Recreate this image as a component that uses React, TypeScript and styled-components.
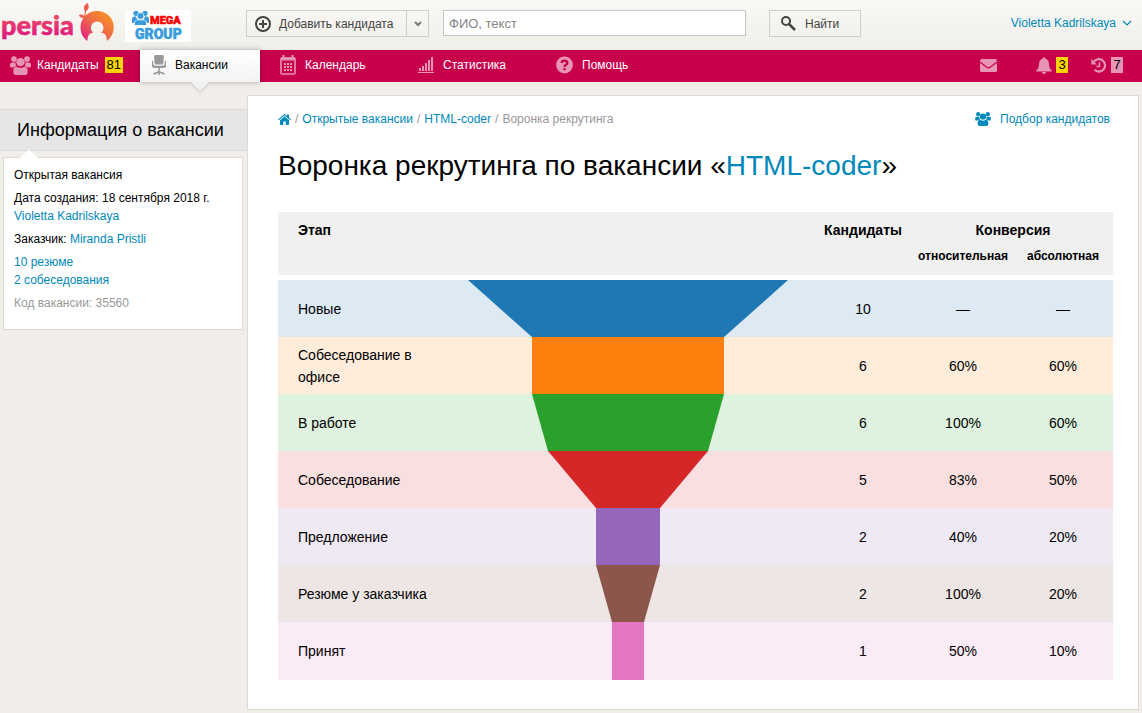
import React from "react";
import styled, { createGlobalStyle } from "styled-components";

const link = "#0088bb";
const pale = "#e795b4";

const GlobalStyle = createGlobalStyle`
  * { box-sizing: border-box; }
  body {
    margin: 0;
    background: #f1eee9;
    font: 12px/18px "Liberation Sans", Arial, sans-serif;
    color: #000;
  }
  a { color: ${link}; text-decoration: none; }
  svg { display: block; flex: none; }
`;

const Header = styled.header`
  display: flex;
  align-items: flex-start;
  height: 50px;
  background: linear-gradient(#faf9f6, #f0eee8);
`;

const Logos = styled.div`
  display: flex;
  flex: none;
  width: 246px;
`;

const PersiaLogo = styled.a`
  display: flex;
  width: 125px;
  height: 50px;
`;

const MegaLogo = styled.a`
  width: 66px;
  height: 32px;
  margin-top: 10px;
  background: #fff;
`;

const AddGroup = styled.div`
  display: flex;
  flex: none;
  margin-top: 10px;
  width: 183px;
  height: 27px;
  border: 1px solid #d0cfca;
`;

const PlainButton = styled.button`
  display: flex;
  align-items: center;
  border: 0;
  padding: 0;
  background: none;
  color: #444;
  font: inherit;
  white-space: nowrap;
`;

const AddButton = styled(PlainButton)`
  flex: 1;
  gap: 8px;
  padding-left: 8px;
`;

const MoreButton = styled(PlainButton)`
  justify-content: center;
  width: 22px;
  border-left: 1px solid #d0cfca;
`;

const SearchForm = styled.form`
  display: flex;
  flex: 0 1 418px;
  gap: 23px;
  margin: 10px 0 0 14px;
`;

const SearchInput = styled.input`
  flex: 1;
  min-width: 0;
  height: 26px;
  padding: 0 5px;
  border: 1px solid #c4c4c4;
  background: #fff;
  font: inherit;
  font-size: 13px;
  &::placeholder { color: #858585; opacity: 1; }
`;

const SearchButton = styled(PlainButton)`
  width: 92px;
  height: 27px;
  gap: 9px;
  padding-left: 11px;
  border: 1px solid #d0cfca;
`;

const UserLink = styled.a`
  display: flex;
  align-items: center;
  gap: 6px;
  margin: 14px 10px 0 auto;
  white-space: nowrap;
`;

const Nav = styled.nav`
  display: flex;
  height: 32px;
  background: #c8004c;
`;

const NavItem = styled.a<{ $active?: boolean; $width: number; $pad: number }>`
  position: relative;
  display: flex;
  align-items: center;
  flex: none;
  gap: 9px;
  width: ${(p) => p.$width}px;
  padding: 0 0 2px ${(p) => p.$pad}px;
  color: ${(p) => (p.$active ? "#000" : "#fff")};
  ${(p) =>
    p.$active &&
    `
    background: linear-gradient(#fff, #f3f3f3);
    box-shadow: 0 0 5px rgba(0, 0, 0, 0.3);
    &::after {
      content: "";
      position: absolute;
      top: 32px;
      left: 51px;
      border: 9px solid transparent;
      border-top-color: #f3f3f3;
      border-bottom: 0;
      filter: drop-shadow(0 2px 1px rgba(0, 0, 0, 0.12));
    }
  `}
`;

const Counted = styled.span`
  display: flex;
  align-items: center;
  gap: 6px;
`;

const Badge = styled.span<{ $muted?: boolean }>`
  padding: 0 2px;
  background: ${(p) => (p.$muted ? pale : "#fdd400")};
  color: #000;
  font-size: 13px;
  line-height: 16px;
  min-width: 12px;
  text-align: center;
`;

const NavTools = styled.div`
  display: flex;
  align-items: center;
  margin-left: auto;
  padding: 0 19px 2px 0;
  gap: 23px;
`;

const Tool = styled.a<{ $spaced?: boolean }>`
  display: flex;
  align-items: center;
  gap: 4px;
  margin-right: ${(p) => (p.$spaced ? 16 : 0)}px;
`;

const Columns = styled.div`
  display: flex;
  align-items: flex-start;
  padding: 13px 3px 3px 0;
`;

const Sidebar = styled.aside`
  flex: none;
  width: 247px;
  padding-top: 14px;
`;

const SideTitle = styled.h2`
  margin: 0;
  padding: 0 17px;
  border: solid #d9d8d3;
  border-width: 1px 0;
  background: #e6e6e6;
  font-size: 18px;
  font-weight: 400;
  line-height: 40px;
  white-space: nowrap;
`;

const InfoBox = styled.section`
  position: relative;
  margin: 6px 4px 0 3px;
  padding: 8px 10px 12px;
  border: 1px solid #dcdad5;
  background: #fff;
  &::before {
    content: "";
    position: absolute;
    top: -9px;
    left: 16px;
    border: 9px solid transparent;
    border-bottom-color: #fff;
    border-top: 0;
  }
`;

const InfoLine = styled.p<{ $muted?: boolean }>`
  margin: 0 0 5px;
  color: ${(p) => (p.$muted ? "#999" : "inherit")};
`;

const Panel = styled.main`
  flex: 1;
  min-width: 0;
  padding: 14px 25px 29px 30px;
  border: 1px solid #dcdad5;
  background: #fff;
`;

const PanelTop = styled.div`
  display: flex;
  justify-content: space-between;
  padding-right: 3px;
`;

const Crumbs = styled.nav`
  display: flex;
  align-items: center;
  gap: 4px;
  color: #999;
`;

const PickLink = styled.a`
  display: flex;
  align-items: center;
  gap: 9px;
`;

const Title = styled.h1`
  margin: 20px 0 28px;
  font-size: 28px;
  font-weight: 400;
  line-height: 36px;
`;

const FunnelTable = styled.table`
  width: 100%;
  border-collapse: collapse;
  table-layout: fixed;
  font-size: 14px;
  line-height: 22px;
`;

const HeadRow = styled.tr<{ $last?: boolean }>`
  height: ${(p) => (p.$last ? 30 : 33)}px;
  background: #f0f0f0;
`;

const HeadCell = styled.th<{ $left?: boolean; $small?: boolean }>`
  padding: ${(p) => (p.$small ? "0" : "7px 0 0")};
  padding-left: ${(p) => (p.$left ? 20 : 0)}px;
  font-size: ${(p) => (p.$small ? 12 : 14)}px;
  text-align: ${(p) => (p.$left ? "left" : "center")};
  vertical-align: top;
`;

const GapCell = styled.td`
  height: 5px;
  padding: 0;
`;

const StageRow = styled.tr<{ $tint: string }>`
  height: 57px;
  background: ${(p) => p.$tint};
`;

const StageName = styled.th`
  padding: 0 30px 0 20px;
  font-weight: 400;
  text-align: left;
`;

const ShapeCell = styled.td`
  padding: 0;
`;

const ValueCell = styled.td`
  padding: 0;
  text-align: center;
`;

const People = ({ size, color }: { size: number; color: string }) => (
  <svg width={size} height={Math.round(size * 0.9)} viewBox="0 0 20 18" fill={color}>
    <circle cx="3.800" cy="2.800" r="2.700" />
    <circle cx="16.200" cy="2.800" r="2.700" />
    <circle cx="10" cy="5.800" r="4" />
    <path d="M0 9.500V8Q0 6.100 1.800 6.100H5.200Q5.300 8.500 6.500 9.600Q4 9.700 3.200 11H1.300Q0 11 0 9.500ZM20 9.500V8Q20 6.100 18.200 6.100H14.800Q14.700 8.500 13.500 9.600Q16 9.700 16.800 11H18.700Q20 11 20 9.500Z" />
    <path d="M3.200 15.500V13.500Q3.200 10.400 6 10.400H6.800Q10 12 13.200 10.400H14Q16.800 10.400 16.800 13.500V15.500Q16.800 18 14.500 18H5.500Q3.200 18 3.200 15.500Z" />
  </svg>
);

const ChairIcon = () => (
  <svg width="14" height="20" viewBox="0 0 14 20" fill="#999">
    <path d="M3.500 0H10.500Q12 0 11.900 1.500L11.300 8.500Q11.200 9.500 10.200 9.500H3.800Q2.800 9.500 2.700 8.500L2.100 1.500Q2 0 3.500 0Z" />
    <path d="M0 6H1.300V9.500L3 10.800H11L12.700 9.500V6H14V10.500Q14 13 11.500 13H2.500Q0 13 0 10.500Z" />
    <path d="M6.200 13H7.800V16.300L12.500 18V19.500H11L7.800 17.800V20H6.200V17.800L3 19.500H1.500V18L6.200 16.300Z" />
  </svg>
);

const CalendarIcon = () => (
  <svg width="16" height="20" viewBox="0 0 16 20" fill="none" stroke={pale}>
    <rect x="1" y="3" width="14" height="16" rx="1" strokeWidth="1.600" />
    <path d="M1 4H15" strokeWidth="3" />
    <path d="M3.500 0V3M12.500 0V3" strokeWidth="2" />
    <path d="M4 9H12M4 12H12M4 15H12" strokeWidth="2" strokeDasharray="2 1" />
  </svg>
);

const StatsIcon = () => (
  <svg width="16" height="16" viewBox="0 0 16 16" fill={pale}>
    <path d="M0 15H16V16H0ZM1 11H3V14H1ZM4 9H6V14H4ZM7 6H9V14H7ZM10 3H12V14H10ZM13 0H15V14H13Z" />
  </svg>
);

const HelpIcon = () => (
  <svg width="17" height="18" viewBox="0 0 18 18">
    <circle cx="9" cy="9" r="8.900" fill={pale} />
    <path d="M6 7Q6 4.500 9 4.500Q12 4.500 12 6.800Q12 8 10.500 8.800Q9 9.500 9 11" fill="none" stroke="#c8004c" strokeWidth="2.400" />
    <path d="M7.800 12.300H10.200V14.500H7.800Z" fill="#c8004c" />
  </svg>
);

const MailIcon = () => (
  <svg width="17" height="13" viewBox="0 0 17 13">
    <rect width="17" height="13" rx="1.500" fill={pale} />
    <path d="M0 3L6.500 8Q8.500 9.500 10.500 8L17 3" fill="none" stroke="#c8004c" strokeWidth="1.200" />
  </svg>
);

const BellIcon = () => (
  <svg width="16" height="17" viewBox="0 0 16 17" fill={pale}>
    <path d="M7 1.500Q7 0 8 0T9 1.500Q13 2.500 13 7Q13 11.500 16 13.500Q16 14.500 15 14.500H1Q0 14.500 0 13.500Q3 11.500 3 7Q3 2.500 7 1.500ZM6 15H10Q10 17 8 17T6 15Z" />
  </svg>
);

const HistoryIcon = () => (
  <svg width="16" height="15" viewBox="0 0 16 15" fill="none" stroke={pale}>
    <path d="M2.500 4.200A6.200 6.200 0 1 1 3.500 11.800" strokeWidth="2.200" />
    <path d="M0 1L.5 6.500H6Z" fill={pale} stroke="none" />
    <path d="M8.500 4V8.500H5.500" strokeWidth="1.500" />
  </svg>
);

const HomeIcon = () => (
  <svg width="13" height="11" viewBox="0 0 13 11" fill={link}>
    <path d="M6.500 2.500L11 6.200V10.200Q11 11 10.200 11H7.800V7.500H5.200V11H2.800Q2 11 2 10.200V6.200ZM6.500 0L9 2V.5H11V3.700L13 5.400L12.300 6.200L6.500 1.500L.7 6.200L0 5.400Z" />
  </svg>
);

const stages = [
  { name: "Новые", count: 10, next: 6, rel: "—", abs: "—", tint: "#ddeaf4", fill: "#1f77b4" },
  { name: "Собеседование в офисе", count: 6, next: 6, rel: "60%", abs: "60%", tint: "#ffecdb", fill: "#ff7f0e" },
  { name: "В работе", count: 6, next: 5, rel: "100%", abs: "60%", tint: "#dff1df", fill: "#2ca02c" },
  { name: "Собеседование", count: 5, next: 2, rel: "83%", abs: "50%", tint: "#f9dfdf", fill: "#d62728" },
  { name: "Предложение", count: 2, next: 2, rel: "40%", abs: "20%", tint: "#efe8f5", fill: "#9467bd" },
  { name: "Резюме у заказчика", count: 2, next: 1, rel: "100%", abs: "20%", tint: "#eee6e4", fill: "#8c564b" },
  { name: "Принят", count: 1, next: 1, rel: "50%", abs: "10%", tint: "#fbebf6", fill: "#e377c2" },
];

const FunnelSlice = ({ from, to, fill, height }: { from: number; to: number; fill: string; height: number }) => {
  const a = from * 16;
  const b = to * 16;
  return (
    <svg width="320" height={height} viewBox={`0 0 320 ${height}`}>
      <path d={`M${160 - a} 0H${160 + a}L${160 + b} ${height}H${160 - b}Z`} fill={fill} />
    </svg>
  );
};

export default function App() {
  return (
    <>
      <GlobalStyle />
      <Header>
        <Logos>
          <PersiaLogo href="#" aria-label="persia">
            <svg width="116" height="50" viewBox="0 0 116 50">
              <defs>
                <linearGradient id="peach" x1="0" y1="1" x2="1" y2="0">
                  <stop offset="0.1" stopColor="#e0297c" />
                  <stop offset="0.5" stopColor="#ee6a47" />
                  <stop offset="1" stopColor="#f9a11b" />
                </linearGradient>
                <linearGradient id="word" x1="0" y1="0" x2="0" y2="1">
                  <stop offset="0.3" stopColor="#ea4668" />
                  <stop offset="0.8" stopColor="#df1f7c" />
                </linearGradient>
              </defs>
              <text x="1" y="35" fontFamily="Lato, sans-serif" fontWeight="900" fontSize="27" fill="url(#word)" stroke="url(#word)" strokeWidth="0.500">persia</text>
              <path d="M87.500 41C83 38 80.500 33 80.500 27.500C80.500 18 88 11 97 11C106.500 11 113.800 18 113.800 27C113.800 33 111 38 106.800 41C107 36 105.500 33.500 101 32.500C103 31.200 103.500 29.500 103.500 27.800A6.300 6.300 0 0 0 90.900 27.800C90.900 29.500 91.500 31.200 93.300 32.500C89 33.500 87.300 36 87.500 41Z" fill="url(#peach)" />
              <path d="M85.500 11.500C82.500 8.500 84 4.500 87.500 3C89.500 6 89 9.800 85.500 11.500ZM78.800 15.500C81 13.500 84 14.500 85 17.500C82 18.500 80 17.500 78.800 15.500Z" fill="#ec5f4d" />
              <path d="M85.500 10.500L84.800 17.500" stroke="#ec5f4d" strokeWidth="1.200" />
            </svg>
          </PersiaLogo>
          <MegaLogo href="#" aria-label="Mega Group">
            <svg width="66" height="32" viewBox="0 0 66 32">
              <g fill="#3a9bdc">
                <circle cx="11" cy="3.300" r="2.600" />
                <circle cx="20" cy="3.300" r="2.600" />
                <circle cx="15.500" cy="6" r="3.400" stroke="#fff" strokeWidth="0.600" />
                <path d="M7 13V9Q7 6.500 9 6.500H11Q11.500 9 13 9.700Q9.500 10 9 13ZM24 13V9Q24 6.500 22 6.500H20Q19.500 9 18 9.700Q21.500 10 22 13ZM9.700 15Q9.700 10.300 12.500 10.300H18.500Q21.300 10.300 21.300 15Z" />
              </g>
              <g fontFamily="Roboto, sans-serif" fontWeight="900">
                <text x="25" y="14" fontSize="11" fill="#f00" stroke="#f00" strokeWidth="0.500">MEGA</text>
                <text x="10" y="29" fontSize="14" fill="#3a9bdc" stroke="#3a9bdc" strokeWidth="0.500">GROUP</text>
              </g>
            </svg>
          </MegaLogo>
        </Logos>
        <AddGroup>
          <AddButton type="button">
            <svg width="16" height="16" viewBox="0 0 16 16" fill="none" stroke="#444" strokeWidth="2">
              <circle cx="8" cy="8" r="7" />
              <path d="M4 8H12M8 4V12" />
            </svg>
            Добавить кандидата
          </AddButton>
          <MoreButton type="button" aria-label="Ещё">
            <svg width="8" height="6" viewBox="0 0 8 6" fill="none" stroke="#777" strokeWidth="2">
              <path d="M1 1L4 4L7 1" />
            </svg>
          </MoreButton>
        </AddGroup>
        <SearchForm>
          <SearchInput type="text" aria-label="Поиск" placeholder="ФИО, текст" />
          <SearchButton type="button">
            <svg width="15" height="15" viewBox="0 0 15 15" fill="none" stroke="#444">
              <circle cx="5" cy="5" r="4" strokeWidth="2" />
              <path d="M8 8L14 14" strokeWidth="2.500" />
            </svg>
            Найти
          </SearchButton>
        </SearchForm>
        <UserLink href="#">
          Violetta Kadrilskaya
          <svg width="10" height="6" viewBox="0 0 10 6" fill="none" stroke={link} strokeWidth="1.200">
            <path d="M1 1L5 5L9 1" />
          </svg>
        </UserLink>
      </Header>

      <Nav>
        <NavItem href="#" $width={140} $pad={10}>
          <Counted>
            <People size={21} color={pale} />
            Кандидаты
            <Badge>81</Badge>
          </Counted>
        </NavItem>
        <NavItem href="#" $active $width={120} $pad={12}>
          <ChairIcon />
          Вакансии
        </NavItem>
        <NavItem href="#" $width={138} $pad={20}>
          <CalendarIcon />
          Календарь
        </NavItem>
        <NavItem href="#" $width={138} $pad={20}>
          <StatsIcon />
          Статистика
        </NavItem>
        <NavItem href="#" $width={138} $pad={20}>
          <HelpIcon />
          Помощь
        </NavItem>
        <NavTools>
          <Tool href="#" $spaced aria-label="Сообщения"><MailIcon /></Tool>
          <Tool href="#"><BellIcon /><Badge>3</Badge></Tool>
          <Tool href="#"><HistoryIcon /><Badge $muted>7</Badge></Tool>
        </NavTools>
      </Nav>

      <Columns>
        <Sidebar>
          <SideTitle>Информация о вакансии</SideTitle>
          <InfoBox>
            <InfoLine>Открытая вакансия</InfoLine>
            <InfoLine>
              Дата создания: 18 сентября 2018 г.
              <br />
              <a href="#">Violetta Kadrilskaya</a>
            </InfoLine>
            <InfoLine>
              Заказчик: <a href="#">Miranda Pristli</a>
            </InfoLine>
            <InfoLine>
              <a href="#">10 резюме</a>
              <br />
              <a href="#">2 собеседования</a>
            </InfoLine>
            <InfoLine $muted>Код вакансии: 35560</InfoLine>
          </InfoBox>
        </Sidebar>

        <Panel>
          <PanelTop>
            <Crumbs>
              <a href="#" aria-label="Главная"><HomeIcon /></a>
              <span>/</span>
              <a href="#">Открытые вакансии</a>
              <span>/</span>
              <a href="#">HTML-coder</a>
              <span>/</span>
              <span>Воронка рекрутинга</span>
            </Crumbs>
            <PickLink href="#">
              <People size={16} color={link} />
              Подбор кандидатов
            </PickLink>
          </PanelTop>
          <Title>
            Воронка рекрутинга по вакансии «<a href="#">HTML-coder</a>»
          </Title>

          <FunnelTable>
            <colgroup>
              <col width="190" />
              <col />
              <col width="100" />
              <col width="100" />
              <col width="100" />
            </colgroup>
            <thead>
              <HeadRow>
                <HeadCell $left rowSpan={2} colSpan={2}>Этап</HeadCell>
                <HeadCell rowSpan={2}>Кандидаты</HeadCell>
                <HeadCell colSpan={2}>Конверсия</HeadCell>
              </HeadRow>
              <HeadRow $last>
                <HeadCell $small>относительная</HeadCell>
                <HeadCell $small>абсолютная</HeadCell>
              </HeadRow>
            </thead>
            <tbody aria-hidden="true">
              <tr><GapCell colSpan={5} /></tr>
            </tbody>
            <tbody>
              {stages.map((s, i) => (
                <StageRow key={s.name} $tint={s.tint}>
                  <StageName scope="row">{s.name}</StageName>
                  <ShapeCell>
                    <FunnelSlice from={s.count} to={s.next} fill={s.fill} height={i === stages.length - 1 ? 58 : 57} />
                  </ShapeCell>
                  <ValueCell>{s.count}</ValueCell>
                  <ValueCell>{s.rel}</ValueCell>
                  <ValueCell>{s.abs}</ValueCell>
                </StageRow>
              ))}
            </tbody>
          </FunnelTable>
        </Panel>
      </Columns>
    </>
  );
}
